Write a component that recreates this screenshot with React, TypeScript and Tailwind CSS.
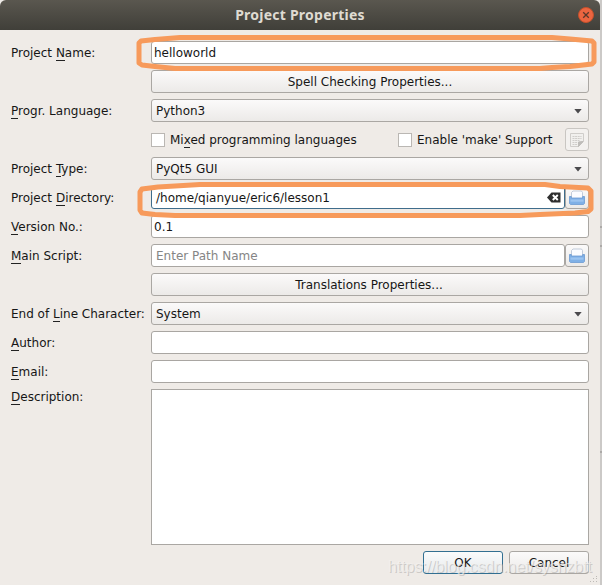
import type { ReactNode } from "react";

const field = "h-[23px] rounded-[3px] border border-[#a9a6a2] bg-white flex items-center";
const button =
  "h-[23px] rounded-[3px] border border-[#aaa7a3] bg-linear-to-b from-[#fbfafa] to-[#eceae8] flex items-center";

function Label({ pre = "", k, post }: { pre?: string; k: string; post: string }) {
  return (
    <div className="flex h-[23px] w-[140px] shrink-0 items-center whitespace-pre">
      <span>
        {pre}
        <span className="border-b border-[#222]">{k}</span>
        {post}
      </span>
    </div>
  );
}

function Row({ label, children }: { label?: ReactNode; children?: ReactNode }) {
  return (
    <div className="flex h-[23px]">
      {label ?? <div className="w-[140px] shrink-0" />}
      <div className="flex w-[438px] items-center">{children}</div>
    </div>
  );
}

function Combo({ text }: { text: string }) {
  return (
    <div className={`${button} w-full justify-between pl-1 pr-[6px]`}>
      <span>{text}</span>
      <svg className="mt-px" width="8" height="5" viewBox="0 0 8 5">
        <path d="M0.3 0h7.4L4 4.600z" fill="#4b4a4d" />
      </svg>
    </div>
  );
}

function FolderButton() {
  return (
    <div className={`${button} w-6 shrink-0 justify-center`}>
      <svg width="16" height="16" viewBox="0 0 16 16">
        <path d="M2.500 9V2.500L4 1h8.500l1 1.500V9z" fill="#fbfcff" stroke="#b4bfd0" strokeWidth=".8" />
        <path d="M.5 6.500h1.800V8h11.400V6.500h1.800v7l-1 1h-13l-1-1z" fill="#7fb0e6" stroke="#6c9bd2" strokeWidth=".8" />
        <path d="M1.500 9.500h13v2.200h-13z" fill="#9cc4f0" />
      </svg>
    </div>
  );
}

function NoteIcon() {
  return (
    <svg width="16" height="16" viewBox="0 0 16 16" fill="none" stroke="#cfcdca">
      <path d="M1.500 1.500H14.500V9.500l-5 5h-8z" fill="#f1f0ee" />
      <path d="M3.500 4.500h9M3.500 6.500h9M3.500 8.500h7M3.500 10.500h5M3.500 12.500h5" strokeDasharray="2 .6" />
      <path d="M14 9.500l-4.500 5V10z" fill="#bebcb9" stroke="#bebcb9" />
    </svg>
  );
}

function Check({ children }: { children: ReactNode }) {
  return (
    <div className="flex items-center gap-[5px] whitespace-pre">
      <div className="h-[14px] w-[14px] border border-[#bab7b3] bg-white" />
      <span>{children}</span>
    </div>
  );
}

const mark = { fill: "none", stroke: "#f79a5b", strokeWidth: 5, strokeLinejoin: "round" as const };

export default function App() {
  return (
    <div className="relative h-[585px] w-[602px] overflow-hidden bg-[#cbc9c7] font-['DejaVu_Sans',sans-serif] text-[12px] leading-[14px] text-[#161616]">
      <div className="flex h-[585px] w-[600px] flex-col bg-[#efebe7]">
        <header className="relative flex h-[30px] items-center justify-center rounded-t-[6px] bg-linear-to-b from-[#5a574f] to-[#403f39]">
          <h1 className="font-['Noto_Sans',sans-serif] text-[14px] font-bold tracking-[0.24px] text-[#dfdbd2]">
            Project Properties
          </h1>
          <div className="absolute right-[6px] top-[7px] flex h-4 w-4 items-center justify-center rounded-full border border-[#c4502b] bg-[#ec6540]">
            <svg width="8" height="8" viewBox="0 0 8 8">
              <path d="M1.2 1.2l5.600 5.600M6.800 1.200L1.200 6.800" stroke="#5a382b" strokeWidth="1.300" />
            </svg>
          </div>
        </header>

        <main className="flex flex-col gap-[6px] pl-[11px] pt-[11px]">
          <Row label={<Label pre="Project " k="N" post="ame:" />}>
            <div className={`${field} w-full pl-[2px]`}>helloworld</div>
          </Row>
          <Row>
            <div className={`${button} w-full justify-center`}>Spell Checking Properties...</div>
          </Row>
          <Row label={<Label k="P" post="rogr. Language:" />}>
            <Combo text="Python3" />
          </Row>
          <Row>
            <div className="w-[247px] shrink-0">
              <Check>
                Mi<span className="border-b border-[#222]">x</span>ed programming languages
              </Check>
            </div>
            <Check>Enable 'make' Support</Check>
            <div className="ml-auto flex h-[23px] w-6 shrink-0 items-center justify-center rounded-[3px] border border-[#c9c6c2] bg-[#f3f1ef]">
              <NoteIcon />
            </div>
          </Row>
          <Row label={<Label pre="Project " k="T" post="ype:" />}>
            <Combo text="PyQt5 GUI" />
          </Row>
          <Row label={<Label pre="Project " k="D" post="irectory:" />}>
            <div className="flex h-[23px] w-[414px] items-center justify-between rounded-[3px] border border-[#3f6d8c] bg-white pl-1 pr-[3px]">
              <span>/home/qianyue/eric6/lesson1</span>
              <svg className="-mt-px" width="14" height="11" viewBox="0 0 14 11">
                <path d="M0 5.500L4.500.5H13.500v10H4.500z" fill="#2f2f2f" />
                <path d="M5.800 3l5 5M10.800 3l-5 5" stroke="#fff" strokeWidth="1.900" />
              </svg>
            </div>
            <FolderButton />
          </Row>
          <Row label={<Label k="V" post="ersion No.:" />}>
            <div className={`${field} w-full pl-[2px]`}>0.1</div>
          </Row>
          <Row label={<Label k="M" post="ain Script:" />}>
            <div className={`${field} w-[414px] pl-1 text-[#858585]`}>Enter Path Name</div>
            <FolderButton />
          </Row>
          <Row>
            <div className={`${button} w-full justify-center pr-[2px]`}>Translations Properties...</div>
          </Row>
          <Row label={<Label pre="End of " k="L" post="ine Character:" />}>
            <Combo text="System" />
          </Row>
          <Row label={<Label k="A" post="uthor:" />}>
            <div className={`${field} w-full`} />
          </Row>
          <Row label={<Label k="E" post="mail:" />}>
            <div className={`${field} w-full`} />
          </Row>
          <div className="flex">
            <div className="-mt-[4px]">
              <Label k="D" post="escription:" />
            </div>
            <div className="h-[156px] w-[438px] border border-[#aaa7a3] bg-white" />
          </div>
          <div className="flex w-[578px] justify-end gap-[6px]">
            <div className="flex h-[23px] w-20 items-center justify-center rounded-[3px] border border-[#326f91] bg-linear-to-b from-[#fafbfb] to-[#e6eaed]">
              OK
            </div>
            <div className={`${button} w-20 justify-center`}>Cancel</div>
          </div>
        </main>
      </div>

      <div className="absolute left-[388px] top-[557px] whitespace-nowrap font-['Liberation_Sans',sans-serif] text-[16px] leading-[20px] tracking-[-0.09px] text-[#f4f2f0]/70 [text-shadow:1px_1px_0_rgba(150,148,146,0.4)]">
        https://blog.csdn.net/sysnzbtt
      </div>

      <svg className="absolute left-0 top-0" width="602" height="585" viewBox="0 0 602 585">
        <path {...mark} d="M180 37.500L155 39.500L141 41L139 43V63L142 65L155 66.500L175 68.500H540L552 67.500L570 66.500L592 64L594 62V43L592 41L570 39L552 37.500Z" />
        <path {...mark} d="M200 184.500L175 186L158 187L142 189L140 192V210L142 213L155 214.500L175 215.500H520L540 214.500L575 213L588 211.500L591 209V191L588 188L560 186.500L545 184.500Z" />
        <path d="M596 576h1v1h-1zM593 578h1v1h-1zM596 578h1v1h-1zM590 581h1v1h-1zM593 581h1v1h-1zM596 581h1v1h-1z" fill="#bdbab6" />
        <path d="M600 227h2M600 246h2M600 452h2" stroke="#8d8b89" />
      </svg>
    </div>
  );
}
